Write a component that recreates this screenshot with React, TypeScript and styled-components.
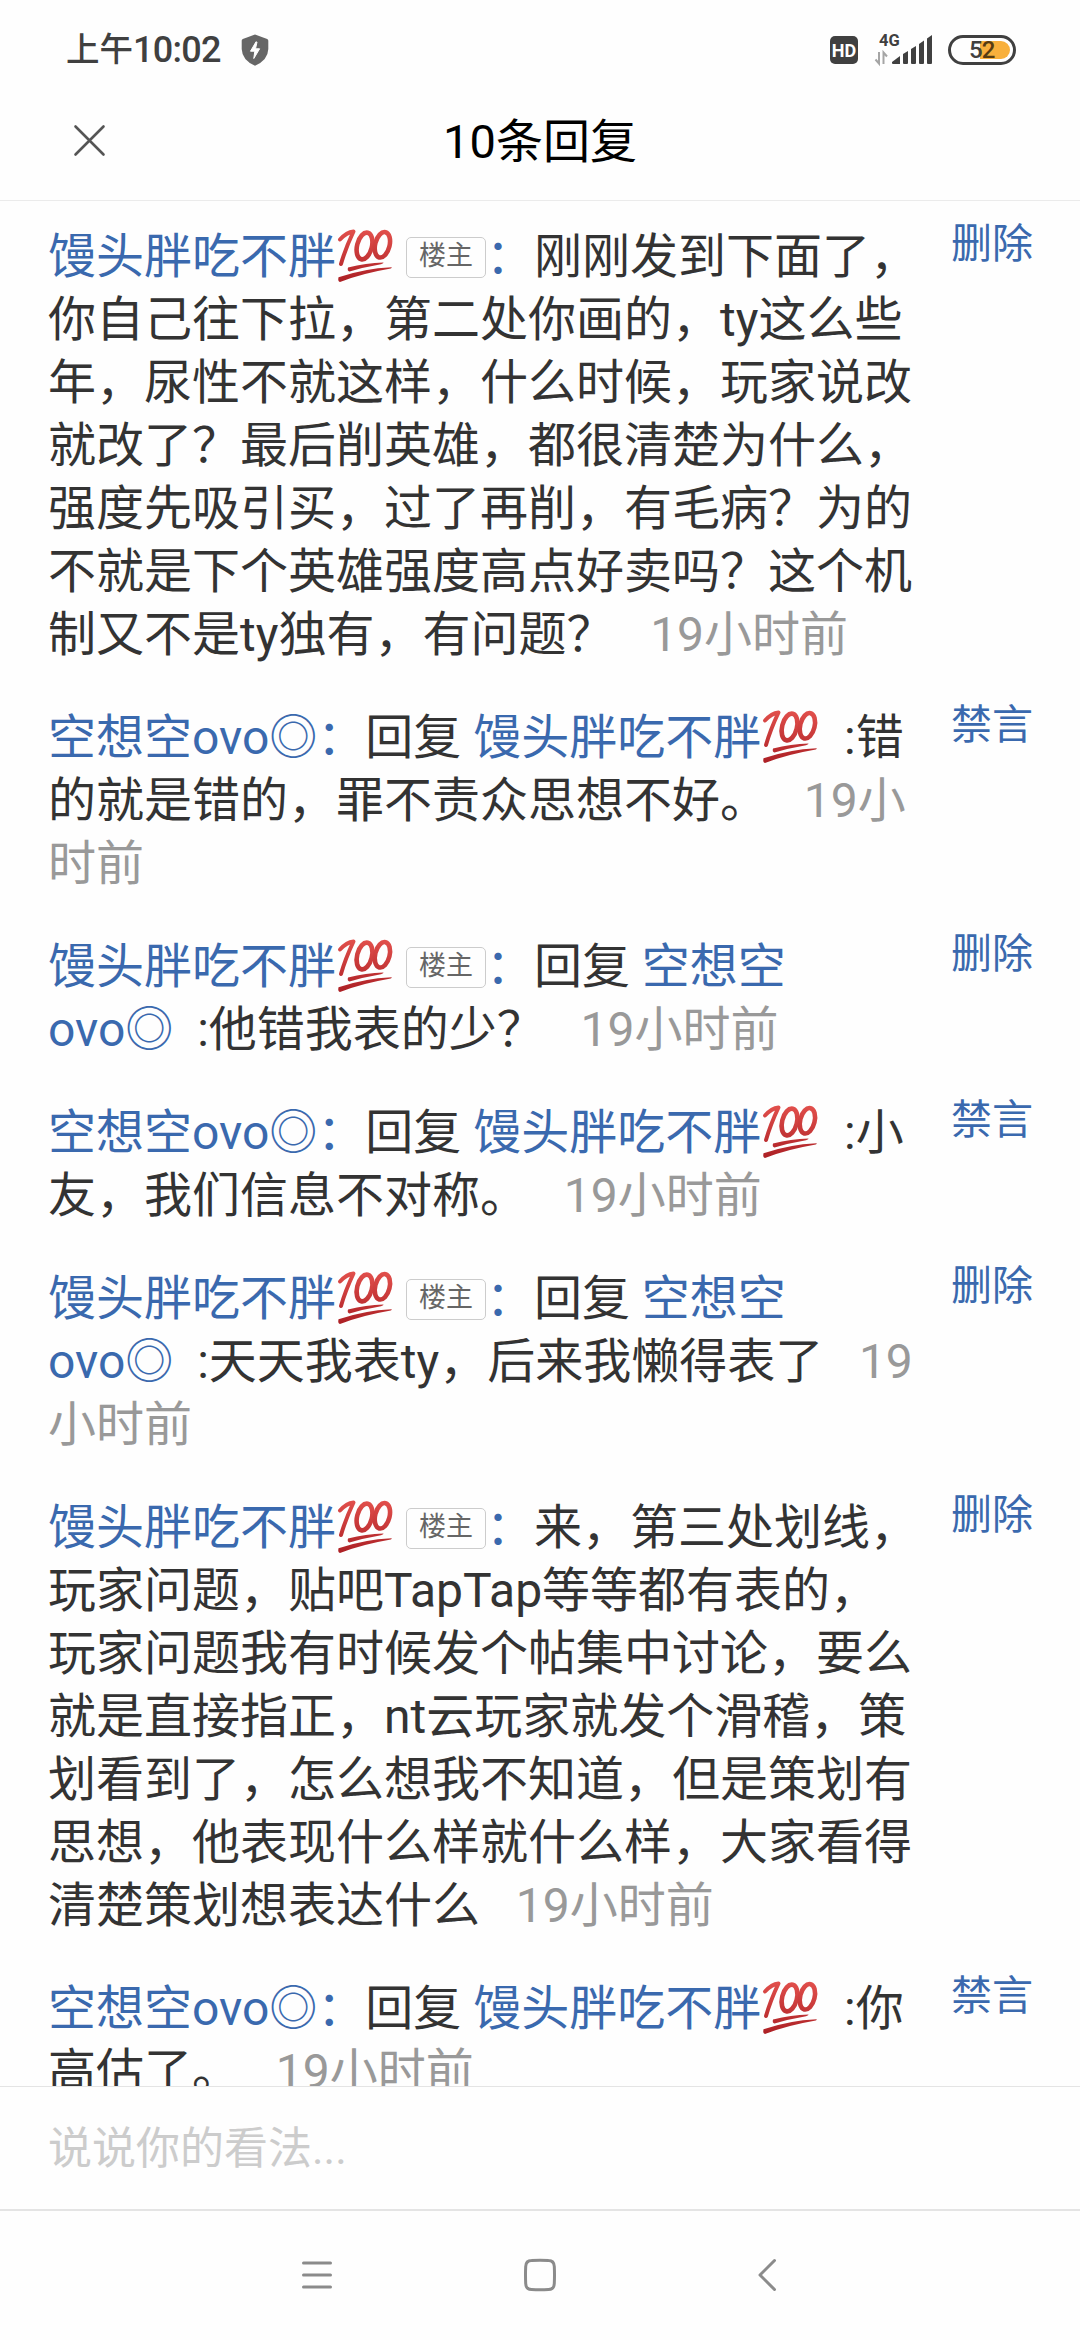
import React from "react";
import styled, { createGlobalStyle } from "styled-components";

const GlobalStyle = createGlobalStyle`
  body { margin: 0; background: #fefefe; }
  * { box-sizing: border-box; }
`;

const Screen = styled.div`
  width: 1080px;
  height: 2340px;
  display: flex;
  flex-direction: column;
  overflow: hidden;
  background: #fefefe;
  color: #333;
  font-family: Roboto, "Noto Sans CJK SC", sans-serif;
`;

const StatusBar = styled.div`
  height: 97px;
  flex: none;
  padding: 2px 64px 0 66px;
  display: flex;
  align-items: center;
  color: #404040;
`;

const Clock = styled.div`
  display: flex;
  align-items: center;
  height: 60px;
  width: 175px;
  white-space: nowrap;
`;

const Meridiem = styled.span`
  font-size: 33.5px;
  line-height: 60px;
  font-weight: 500;
`;

const Digits = styled.span`
  font-size: 36px;
  line-height: 60px;
  font-weight: 500;
  letter-spacing: -0.7px;
`;

const StatusIcons = styled.div`
  margin-left: auto;
  display: flex;
  align-items: center;
`;

const HdBadge = styled.div`
  width: 28px;
  height: 28px;
  border-radius: 5px;
  background: #404040;
  color: #fff;
  font-size: 18px;
  font-weight: 700;
  line-height: 29px;
  text-align: center;
  margin-right: 16px;
`;

const Signal = styled.svg`
  display: block;
  overflow: visible;
  margin-right: 15px;
`;

const Battery = styled.div`
  width: 68px;
  height: 30px;
  border: 3px solid #404040;
  border-radius: 15px;
  padding: 3px;
  display: flex;
  justify-content: flex-end;
  position: relative;
`;

const Charge = styled.div`
  width: 30px;
  height: 18px;
  background: #f8b03c;
  border-radius: 0 9px 9px 0;
`;

const Percent = styled.span`
  position: absolute;
  left: 18px;
  top: 0;
  line-height: 25px;
  font-size: 24px;
  font-weight: 500;
  letter-spacing: -1px;
  color: #404040;
`;

const OnCharge = styled.span`
  color: #573c12;
`;

const Header = styled.header`
  height: 104px;
  flex: none;
  border-bottom: 1px solid #ebebeb;
  display: grid;
  grid-template-columns: 180px 1fr 180px;
  padding-bottom: 16px;
  align-items: center;
`;

const Close = styled.svg`
  display: block;
  margin-left: 73px;
`;

const Title = styled.h1`
  margin: 3px 0 0;
  font-size: 47px;
  line-height: 70px;
  font-weight: 400;
  text-align: center;
  color: #000;
`;

const List = styled.main`
  flex: 1;
  min-height: 0;
  overflow: hidden;
  padding: 24px 48px 0;
  display: flex;
  flex-direction: column;
  gap: 40px;
`;

const Row = styled.article`
  flex: none;
  display: flex;
  justify-content: space-between;
  align-items: flex-start;
`;

const Body = styled.p`
  margin: 0;
  width: 870px;
  font-size: 48px;
  line-height: 63px;
  white-space: pre;
`;

const Name = styled.span`
  color: #3a69ae;
`;

const Time = styled.span`
  color: #999;
`;

const Tag = styled.span`
  display: inline-block;
  width: 80px;
  height: 41px;
  margin-left: -1px;
  border: 1.5px solid #ccc;
  border-radius: 5px;
  color: #666;
  font-size: 27px;
  line-height: 37px;
  text-align: center;
  vertical-align: 8px;
`;

const Action = styled.button`
  border: 0;
  padding: 0;
  margin: -9px -1px 0 0;
  background: none;
  font: inherit;
  font-size: 41px;
  line-height: 56px;
  color: #3a69ae;
`;

const Hundred = styled.svg`
  display: inline-block;
  vertical-align: -11px;
`;

const Composer = styled.div`
  height: 125px;
  flex: none;
  border-top: 1px solid #e4e4e4;
  border-bottom: 2px solid #e4e4e4;
  padding: 2px 48px 0;
  display: flex;
  align-items: center;
  font-size: 44px;
  line-height: 60px;
  color: #ccc;
`;

const NavBar = styled.nav`
  height: 129px;
  flex: none;
  display: grid;
  grid-template-columns: 34px 34px 34px;
  column-gap: 189px;
  justify-content: center;
  align-items: center;
  padding-bottom: 1px;
`;

const NavIcon = styled.svg`
  display: block;
  fill: none;
  stroke: #8b8b8b;
  stroke-width: 3;
  stroke-linecap: round;
  stroke-linejoin: round;
`;

function HundredIcon() {
  return (
    <Hundred width="59" height="56" viewBox="-2 -1 59 56">
      <defs>
        <linearGradient id="red" x1="0" y1="0" x2="0" y2="54" gradientUnits="userSpaceOnUse">
          <stop offset="0" stopColor="#e2504c" />
          <stop offset="1" stopColor="#ab1f24" />
        </linearGradient>
      </defs>
      <g fill="none" stroke="url(#red)" strokeLinecap="round" strokeLinejoin="round">
        <path d="M2 10.5 C7 5 11 3 15.5 2.5 C11 12 7 21 3 35" strokeWidth="4" />
        <ellipse cx="26.5" cy="17" rx="7.4" ry="13.6" transform="rotate(14 26.5 17)" strokeWidth="4.6" />
        <ellipse cx="44.4" cy="15.8" rx="7.2" ry="13" transform="rotate(14 44.4 15.8)" strokeWidth="4.6" />
      </g>
      <path d="M10 38.5 Q28 34 45.5 33.6 Q46 34.5 43 35.2 Q26 38 11.5 42.6 Q9 42 10 38.5Z" fill="url(#red)" />
      <path d="M0.5 48.2 Q26 39.5 53.5 38.2 Q54.5 39 51.5 39.8 Q24 44.5 2 53 Q-0.5 52.5 0.5 48.2Z" fill="url(#red)" />
    </Hundred>
  );
}

const Starter = () => <Name>馒头胖吃不胖<HundredIcon /></Name>;
const Host = () => <><Starter /> <Tag>楼主</Tag><Name>：</Name></>;
const Guest = () => <Name>空想空ovo◎：</Name>;

const ago = "19小时前";

const comments: { action: string; body: React.ReactNode }[] = [
  {
    action: "删除",
    body: (
      <>
        <Host />
        {"刚刚发到下面了，\n你自己往下拉，第二处你画的，ty这么些\n年，尿性不就这样，什么时候，玩家说改\n就改了？最后削英雄，都很清楚为什么，\n强度先吸引买，过了再削，有毛病？为的\n不就是下个英雄强度高点好卖吗？这个机\n制又不是ty独有，有问题？   "}
        <Time>{ago}</Time>
      </>
    ),
  },
  {
    action: "禁言",
    body: (
      <>
        <Guest />{"回复 "}<Starter />{"  :错\n的就是错的，罪不责众思想不好。   "}
        <Time>{"19小\n时前"}</Time>
      </>
    ),
  },
  {
    action: "删除",
    body: (
      <>
        <Host />{"回复 "}<Name>{"空想空\novo◎"}</Name>{"  :他错我表的少？   "}
        <Time>{ago}</Time>
      </>
    ),
  },
  {
    action: "禁言",
    body: (
      <>
        <Guest />{"回复 "}<Starter />{"  :小\n友，我们信息不对称。   "}
        <Time>{ago}</Time>
      </>
    ),
  },
  {
    action: "删除",
    body: (
      <>
        <Host />{"回复 "}<Name>{"空想空\novo◎"}</Name>{"  :天天我表ty，后来我懒得表了   "}
        <Time>{"19\n小时前"}</Time>
      </>
    ),
  },
  {
    action: "删除",
    body: (
      <>
        <Host />
        {"来，第三处划线，\n玩家问题，贴吧TapTap等等都有表的，\n玩家问题我有时候发个帖集中讨论，要么\n就是直接指正，nt云玩家就发个滑稽，策\n划看到了，怎么想我不知道，但是策划有\n思想，他表现什么样就什么样，大家看得\n清楚策划想表达什么   "}
        <Time>{ago}</Time>
      </>
    ),
  },
  {
    action: "禁言",
    body: (
      <>
        <Guest />{"回复 "}<Starter />{"  :你\n高估了。   "}
        <Time>{ago}</Time>
      </>
    ),
  },
];

export default function App() {
  return (
    <Screen lang="zh-CN">
      <GlobalStyle />
      <StatusBar>
        <Clock>
          <Meridiem>上午</Meridiem>
          <Digits>10:02</Digits>
        </Clock>
        <svg width="28" height="32" viewBox="0 0 28 32">
          <path d="M14 0.5 L26.2 5 Q27.3 5.5 27.3 6.8 V15 Q27 26 14 31.8 Q1 26 0.7 15 V6.8 Q0.7 5.5 1.8 5Z" fill="#666" />
          <path d="M15.2 7.5 L9.5 17.2 H13.8 L12.8 24.5 L18.6 14.8 H14.5 L16 8" fill="#fff" stroke="#fff" strokeWidth="1" strokeLinejoin="round" />
        </svg>
        <StatusIcons>
          <HdBadge>HD</HdBadge>
          <Signal width="59" height="38" viewBox="0 -2 59 38">
            <text x="5" y="12.5" fontSize="16.5" fontWeight="700" fill="#404040">4G</text>
            <g fill="none" stroke="#a5a5a5" strokeWidth="2">
              <path d="M5 19 V30.5 L1.5 26.5" />
              <path d="M9.5 31 V19.5 L13 23.5" />
            </g>
            <g fill="#404040">
              <path d="M18 29 L26 23 V31 H19 Q18 31 18 30Z" />
              <path d="M29 21 L34 18 V30 Q34 31 33 31 H30 Q29 31 29 30Z" />
              <path d="M37 16 L42 13 V30 Q42 31 41 31 H38 Q37 31 37 30Z" />
              <path d="M45 11 L50 7.5 V30 Q50 31 49 31 H46 Q45 31 45 30Z" />
              <path d="M53 5.5 L58 2 V30 Q58 31 57 31 H54 Q53 31 53 30Z" />
            </g>
          </Signal>
          <Battery>
            <Charge />
            <Percent>5<OnCharge>2</OnCharge></Percent>
          </Battery>
        </StatusIcons>
      </StatusBar>
      <Header>
        <Close width="33" height="33" viewBox="0 0 33 33">
          <path d="M2.5 2.5 L30.5 30.5 M30.5 2.5 L2.5 30.5" stroke="#555" strokeWidth="2.6" strokeLinecap="round" />
        </Close>
        <Title>10条回复</Title>
      </Header>
      <List>
        {comments.map((c, i) => (
          <Row key={i}>
            <Body>{c.body}</Body>
            <Action>{c.action}</Action>
          </Row>
        ))}
      </List>
      <Composer>说说你的看法...</Composer>
      <NavBar>
        <NavIcon width="34" height="34" viewBox="0 0 34 34">
          <path d="M3.5 5 H30.5 M3.5 17 H30.5 M3.5 29 H30.5" />
        </NavIcon>
        <NavIcon width="34" height="34" viewBox="0 0 34 34">
          <path d="M8.5 2.5 Q17 2 25.5 2.5 Q31 2.5 31.3 8.5 Q31.7 17 31.3 25.5 Q31 31.5 25.5 31.5 Q17 32 8.5 31.5 Q3 31.5 2.7 25.5 Q2.3 17 2.7 8.5 Q3 2.5 8.5 2.5Z" />
        </NavIcon>
        <NavIcon width="34" height="34" viewBox="0 0 34 34">
          <path d="M28.5 2.5 L14 17 L28.5 31.5" />
        </NavIcon>
      </NavBar>
    </Screen>
  );
}
